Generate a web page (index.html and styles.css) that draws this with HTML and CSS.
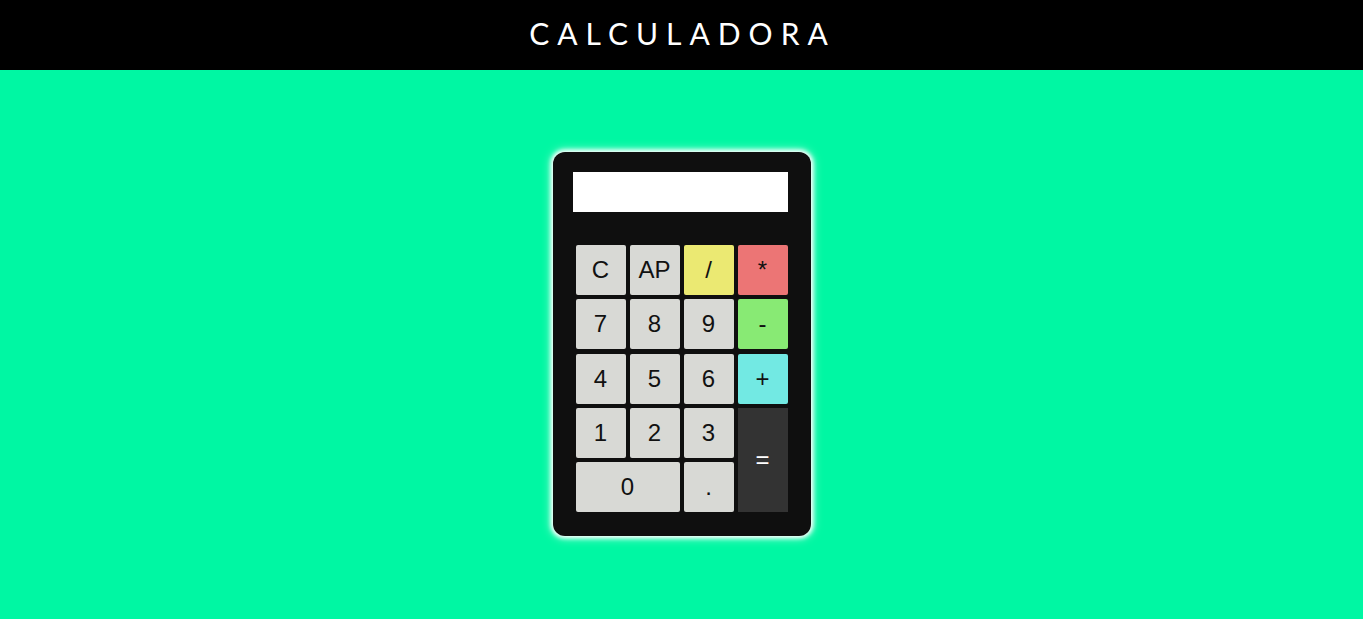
FILE: index.html
```html
<!DOCTYPE html>
<html lang="es">
<head>
<meta charset="utf-8">
<title>Calculadora</title>
<link rel="stylesheet" href="styles.css">
</head>
<body>
<header class="topbar"><h1 class="title">CALCULADORA</h1></header>
<main class="stage">
  <div class="calc">
    <div class="display"></div>
    <div class="keys">
      <button class="key">C</button>
      <button class="key">AP</button>
      <button class="key key-div">/</button>
      <button class="key key-mul">*</button>
      <button class="key">7</button>
      <button class="key">8</button>
      <button class="key">9</button>
      <button class="key key-sub">-</button>
      <button class="key">4</button>
      <button class="key">5</button>
      <button class="key">6</button>
      <button class="key key-add">+</button>
      <button class="key">1</button>
      <button class="key">2</button>
      <button class="key">3</button>
      <button class="key key-eq">=</button>
      <button class="key key-zero">0</button>
      <button class="key">.</button>
    </div>
  </div>
</main>
</body>
</html>
```
FILE: styles.css
```css
html, body {
  margin: 0;
  padding: 0;
}
body {
  background: #00f7a3;
  min-height: 619px;
  font-family: "Liberation Sans", Arial, sans-serif;
}
.topbar {
  height: 70px;
  background: #000;
  display: flex;
  align-items: center;
  justify-content: center;
}
.title {
  margin: 0 0 4px 0;
  color: #fff;
  font-family: Lato, "Liberation Sans", sans-serif;
  font-weight: 400;
  font-size: 30px;
  letter-spacing: 8px;
  padding-left: 2px;
  line-height: 1;
}
.stage {
  display: flex;
  justify-content: center;
  padding-top: 82px;
}
.calc {
  width: 258px;
  box-sizing: border-box;
  background: #0f0f0f;
  border-radius: 12px;
  padding: 20px 23px 24px 20px;
  box-shadow: 0 0 4px 2px #ffffff, 0 0 8px 3px rgba(255,255,255,0.5);
}
.display {
  width: 215px;
  height: 40px;
  background: #fff;
}
.keys {
  margin-top: 33px;
  margin-left: 3px;
  display: grid;
  grid-template-columns: repeat(4, 50px);
  grid-auto-rows: 50px;
  column-gap: 4px;
  row-gap: 4.25px;
}
.key {
  border: none;
  margin: 0;
  padding: 0;
  border-radius: 2px;
  background: #d8d9d5;
  color: #111;
  font-family: "Liberation Sans", Arial, sans-serif;
  font-size: 24px;
}
.key-div { background: #ebe972; }
.key-mul { background: #ec7575; }
.key-sub { background: #88ea74; }
.key-add { background: #72e9e3; }
.key-eq {
  grid-row: span 2;
  background: #333333;
  color: #fff;
  border-radius: 0;
  font-size: 24px;
}
.key-zero {
  grid-column: span 2;
}
```
